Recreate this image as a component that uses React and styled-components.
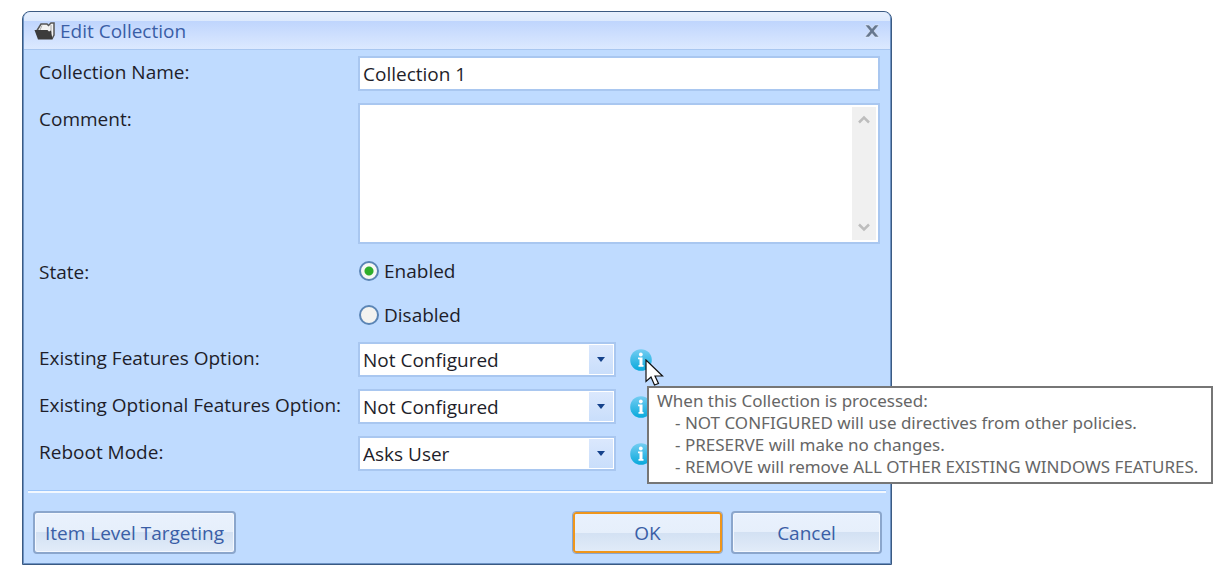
import React, { useState } from "react";
import styled, { createGlobalStyle, css } from "styled-components";

const GlobalStyle = createGlobalStyle`
  *, *::before, *::after { box-sizing: border-box; }
  body {
    margin: 0;
    background: #ffffff;
    font-family: "Open Sans", "Noto Sans", sans-serif;
    font-size: 19px;
    line-height: 24px;
    color: #1e1e2a;
  }
  button, input, textarea, select { font: inherit; color: inherit; }
`;

const Page = styled.main`
  padding: 11px 22px 16px;
`;

const Dialog = styled.section`
  position: relative;
  width: 100%;
  max-width: 870px;
  padding: 0 1px 1px;
  border: 1px solid #3b5a82;
  border-radius: 8px 8px 0 0;
  background: #bfdbff;
  box-shadow: inset 0 0 0 1px #6d93c4;
`;

const TitleBar = styled.header`
  display: flex;
  align-items: center;
  gap: 4px;
  height: 38px;
  padding: 0 10px;
  border-bottom: 1px solid #a9c7f0;
  border-radius: 6px 6px 0 0;
  background: linear-gradient(#e6effd 0, #dce9fd 9px, #bfd5fd 9px, #dce9ff 100%);
`;

const Title = styled.h1`
  flex: 1;
  margin: 0;
  font-size: 19px;
  font-weight: 400;
  color: #3a5ea6;
`;

const CloseButton = styled.button`
  display: flex;
  padding: 0;
  border: 0;
  background: none;
`;

const Form = styled.form`
  padding: 6px 10px 20px 15px;
`;

const Fields = styled.div`
  display: grid;
  grid-template-columns: 319px minmax(0, 1fr);
  row-gap: 12px;
`;

const Label = styled.label`
  padding-top: 4px;
`;

const fieldBorder = css`
  border: 2px solid #a9c7f0;
  background: #ffffff;
`;

const TextInput = styled.input`
  ${fieldBorder}
  width: 100%;
  height: 35px;
  padding: 1px 3px 0;
  outline: none;
`;

const CommentBox = styled.div`
  ${fieldBorder}
  display: flex;
  height: 141px;
  padding: 2px;
`;

const CommentInput = styled.textarea`
  flex: 1;
  min-width: 0;
  padding: 0 2px;
  border: 0;
  outline: none;
  resize: none;
  background: none;
  overflow: hidden;
`;

const ScrollRail = styled.div`
  display: flex;
  flex-direction: column;
  justify-content: space-between;
  align-items: center;
  width: 24px;
  padding: 8px 0;
  background: #f0f0f0;
`;

const Radios = styled.div`
  display: grid;
  row-gap: 20px;
  padding: 3px 0 3px 1px;
`;

const RadioLabel = styled.label`
  display: flex;
  align-items: center;
  gap: 5px;
`;

const Radio = styled.input`
  appearance: none;
  width: 20px;
  height: 20px;
  margin: 0;
  border: 2px solid #5b85b5;
  border-radius: 50%;
  background: #f3f3f0;
  &:checked {
    background: radial-gradient(circle at center, #2fae2b 0, #2fae2b 4px, #f7f8f4 5px);
  }
`;

const SelectLine = styled.div`
  display: flex;
  align-items: center;
  gap: 14px;
`;

const SelectBox = styled.div`
  ${fieldBorder}
  display: flex;
  width: 258px;
  height: 35px;
`;

const Select = styled.select`
  appearance: none;
  flex: 1;
  min-width: 0;
  padding: 0 3px;
  border: 0;
  outline: none;
  background: none;
`;

const SelectArrow = styled.span`
  display: flex;
  align-items: center;
  justify-content: center;
  width: 24px;
  margin: 1px;
  pointer-events: none;
  background: linear-gradient(#dbe8fd, #c9defb);
`;

const InfoIcon = styled.svg`
  display: block;
  flex: none;
`;

const InfoAnchor = styled.span`
  position: relative;
  display: block;
`;

const Pointer = styled.svg`
  position: absolute;
  top: 10px;
  left: 15px;
  z-index: 2;
`;

const Tooltip = styled.div`
  position: absolute;
  top: 37px;
  left: 17px;
  z-index: 1;
  width: 566px;
  padding: 2px 8px 4px;
  border: 2px solid #767676;
  background: #ffffff;
  color: #666666;
  font-family: "Noto Sans", "Open Sans", sans-serif;
  font-size: 17px;
  line-height: 22px;
  white-space: nowrap;
`;

const TooltipList = styled.ul`
  margin: 0;
  padding-left: 18px;
  list-style: none;
`;

const Footer = styled.footer`
  display: flex;
  gap: 8px;
  margin: 0 4px;
  padding: 18px 4px 9px 5px;
  border-top: 2px solid #f2f8ff;
  box-shadow: 0 -1px 0 #9cc6fb;
`;

const Button = styled.button`
  min-width: 151px;
  height: 43px;
  padding: 0 10px;
  border: 2px solid #8ba6cc;
  border-radius: 4px;
  outline: none;
  color: #3a5ea6;
  background: linear-gradient(#e9f1fd 0, #e6effb 50%, #d3e1f3 50%, #e2ecf9 100%);
  box-shadow: inset 0 0 0 1px #f4f8fe;
  ${({ $default }) =>
    $default &&
    css`
      border: 1px solid #8ba6cc;
      box-shadow: inset 0 0 0 2px #ef961c;
    `}
  ${({ $start }) => $start && "margin-right: auto;"}
`;

function FolderGlyph() {
  return (
    <svg width="22" height="20" viewBox="0 0 22 20" aria-hidden="true">
      <path d="M3 9.500L7 3h6l1.500 1.500L17 2h3v12l-2 4" fill="#f2f2f2" stroke="#555" strokeWidth="1.500" />
      <path d="M8 4.500L6 9M17 4v8" fill="none" stroke="#aaa" strokeWidth="1" />
      <path d="M0.500 9h13l1.500 1.500 2-1 1.500 9H4z" fill="#3c3c3c" />
    </svg>
  );
}

function CloseGlyph() {
  return (
    <svg width="16" height="14" viewBox="0 0 16 14" aria-hidden="true">
      <path d="M1 1h4l3 3.500L11 1h4l-5 6 5 6h-4L8 9.500 5 13H1l5-6z" fill="#66778f" stroke="#eef4ff" strokeWidth="0.500" />
    </svg>
  );
}

function Chevron({ down }) {
  return (
    <svg width="12" height="9" viewBox="0 0 12 9" aria-hidden="true">
      <path d={down ? "M1 1.500l5 5 5-5" : "M1 7.500l5-5 5 5"} fill="none" stroke="#bdbdbd" strokeWidth="2.500" />
    </svg>
  );
}

function Info() {
  return (
    <InfoIcon width="22" height="22" viewBox="0 0 22 22" role="img" aria-label="Information">
      <defs>
        <linearGradient id="infoFill" x1="0" y1="0" x2="0" y2="1">
          <stop offset="0" stopColor="#74cdf2" />
          <stop offset="1" stopColor="#08a9dc" />
        </linearGradient>
      </defs>
      <circle cx="11" cy="11" r="10.800" fill="url(#infoFill)" />
      <circle cx="10.800" cy="5.500" r="1.900" fill="#fff" />
      <path d="M8 8.500h4.500v7.500H13.500v1.800H8.500v-1.800h1v-5.700H8z" fill="#fff" />
    </InfoIcon>
  );
}

function Dropdown({ id, value, options, children }) {
  return (
    <SelectLine>
      <SelectBox>
        <Select id={id} defaultValue={value}>
          {options.map((o) => (
            <option key={o}>{o}</option>
          ))}
        </Select>
        <SelectArrow>
          <svg width="8" height="5" viewBox="0 0 8 5" aria-hidden="true">
            <path d="M0 0h8L4 5z" fill="#15428b" />
          </svg>
        </SelectArrow>
      </SelectBox>
      <InfoAnchor>
        <Info />
        {children}
      </InfoAnchor>
    </SelectLine>
  );
}

const featureOptions = ["Not Configured", "Preserve", "Remove"];

export default function App() {
  const [state, setState] = useState("Enabled");
  return (
    <Page>
      <GlobalStyle />
      <Dialog role="dialog" aria-labelledby="title">
        <TitleBar>
          <FolderGlyph />
          <Title id="title">Edit Collection</Title>
          <CloseButton type="button" aria-label="Close">
            <CloseGlyph />
          </CloseButton>
        </TitleBar>
        <Form id="collection" onSubmit={(e) => e.preventDefault()}>
          <Fields>
            <Label htmlFor="name">Collection Name:</Label>
            <TextInput id="name" defaultValue="Collection 1" />
            <Label htmlFor="comment">Comment:</Label>
            <CommentBox>
              <CommentInput id="comment" />
              <ScrollRail aria-hidden="true">
                <Chevron />
                <Chevron down />
              </ScrollRail>
            </CommentBox>
            <Label as="span" id="state">State:</Label>
            <Radios role="radiogroup" aria-labelledby="state">
              {["Enabled", "Disabled"].map((s) => (
                <RadioLabel key={s}>
                  <Radio type="radio" name="state" checked={state === s} onChange={() => setState(s)} />
                  {s}
                </RadioLabel>
              ))}
            </Radios>
            <Label htmlFor="features">Existing Features Option:</Label>
            <Dropdown id="features" value="Not Configured" options={featureOptions}>
              <Pointer width="20" height="28" viewBox="0 0 20 28" aria-hidden="true">
                <path d="M1 1v21.500l5-4.500 3.500 8 4-1.500L10 17h7.500z" fill="#fff" stroke="#111" strokeWidth="1.200" />
              </Pointer>
              <Tooltip role="tooltip">
                When this Collection is processed:
                <TooltipList>
                  <li>- NOT CONFIGURED will use directives from other policies.</li>
                  <li>- PRESERVE will make no changes.</li>
                  <li>- REMOVE will remove ALL OTHER EXISTING WINDOWS FEATURES.</li>
                </TooltipList>
              </Tooltip>
            </Dropdown>
            <Label htmlFor="optional">Existing Optional Features Option:</Label>
            <Dropdown id="optional" value="Not Configured" options={featureOptions} />
            <Label htmlFor="reboot">Reboot Mode:</Label>
            <Dropdown id="reboot" value="Asks User" options={["Asks User", "Automatic", "Suppress"]} />
          </Fields>
        </Form>
        <Footer>
          <Button type="button" $start>Item Level Targeting</Button>
          <Button type="submit" form="collection" $default>OK</Button>
          <Button type="button">Cancel</Button>
        </Footer>
      </Dialog>
    </Page>
  );
}
